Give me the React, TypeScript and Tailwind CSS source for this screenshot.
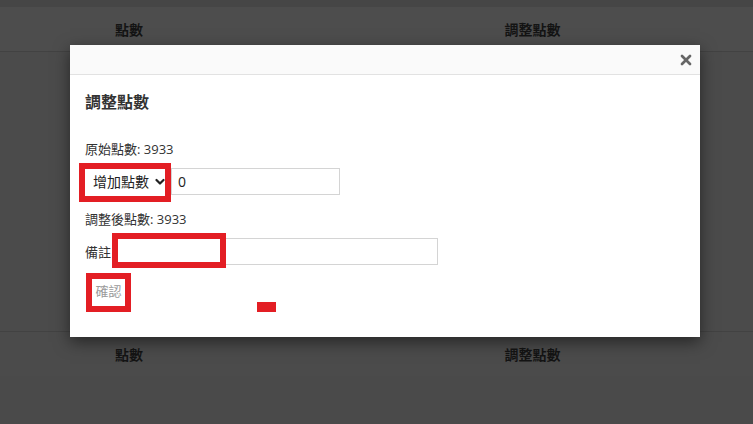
import { X } from 'lucide-react';

const font = { fontFamily: '"Open Sans", "Noto Sans CJK TC", sans-serif' };

function HeaderRow() {
  return (
    <div className="grid grid-cols-[258px_549px] h-[44px] items-center text-[14px] font-bold text-[#141414]">
      <div className="text-center">點數</div>
      <div className="text-center">調整點數</div>
    </div>
  );
}

function Chevron() {
  return (
    <svg width="10" height="8" viewBox="0 0 10 8" fill="none">
      <path d="M1.5 2 L5 5.5 L8.5 2" stroke="#222" strokeWidth="2.2" strokeLinecap="round" strokeLinejoin="round" />
    </svg>
  );
}

export default function App() {
  return (
    <div className="relative h-[424px] w-[753px] overflow-hidden bg-[#4a4a4a]" style={font}>
      {/* table behind the backdrop */}
      <div className="h-[7px] bg-[#464646]" />
      <div className="bg-[#4d4d4d] border-b border-[#424242]">
        <HeaderRow />
      </div>
      <div className="h-[280px] bg-[#4b4b4b] border-b border-[#424242]" />
      <div className="bg-[#4b4b4b]">
        <HeaderRow />
      </div>

      {/* modal */}
      <div className="absolute left-[70px] top-[45px] w-[630px] h-[292px] bg-white shadow-[0_5px_15px_rgba(0,0,0,0.5)] text-[#333]">
        <div className="h-[30px] bg-[#fafafa] border-b border-[#e2e2e2] flex items-center justify-end pr-[6px]">
          <X className="w-[16px] h-[16px] text-[#666]" strokeWidth={4} />
        </div>

        <div className="pl-[15px] pt-[17px]">
          <h4 className="text-[16px] leading-[20px] font-bold">調整點數</h4>

          <p className="mt-[28px] text-[13px] leading-[18px]">原始點數: 3933</p>

          <div className="mt-[4px] flex items-center h-[39px]">
            <div className="flex items-center h-[27px] w-[86px] pl-[8px] text-[14px] text-[#222] gap-[6px]">
              <span>增加點數</span>
              <Chevron />
            </div>
            <div className="h-[27px] w-[169px] border border-[#d4d4d4] flex items-center pl-[6px] text-[14px] text-[#222]">
              0
            </div>
          </div>

          <p className="mt-[9px] text-[13px] leading-[18px]">調整後點數: 3933</p>

          <div className="mt-[10px] flex items-center h-[27px]">
            <span className="text-[13px] w-[27px] pt-[3px]">備註</span>
            <div className="h-[27px] w-[326px] border border-[#d4d4d4]" />
          </div>

          <div className="mt-[7px] ml-[1px] w-[45px] h-[39px] flex items-center justify-center text-[13px] text-[#9a9a9a]">
            確認
          </div>
        </div>

        {/* red annotation boxes */}
        <div className="absolute left-[9px] top-[118px] w-[92px] h-[39px] border-[6px] border-[#e31e24]" />
        <div className="absolute left-[42px] top-[188px] w-[114px] h-[35px] border-[6px] border-[#e31e24] bg-white" />
        <div className="absolute left-[16px] top-[228px] w-[45px] h-[39px] border-[6px] border-[#e31e24]" />
        <div className="absolute left-[187px] top-[257px] w-[19px] h-[10px] bg-[#e31e24]" />
      </div>
    </div>
  );
}
